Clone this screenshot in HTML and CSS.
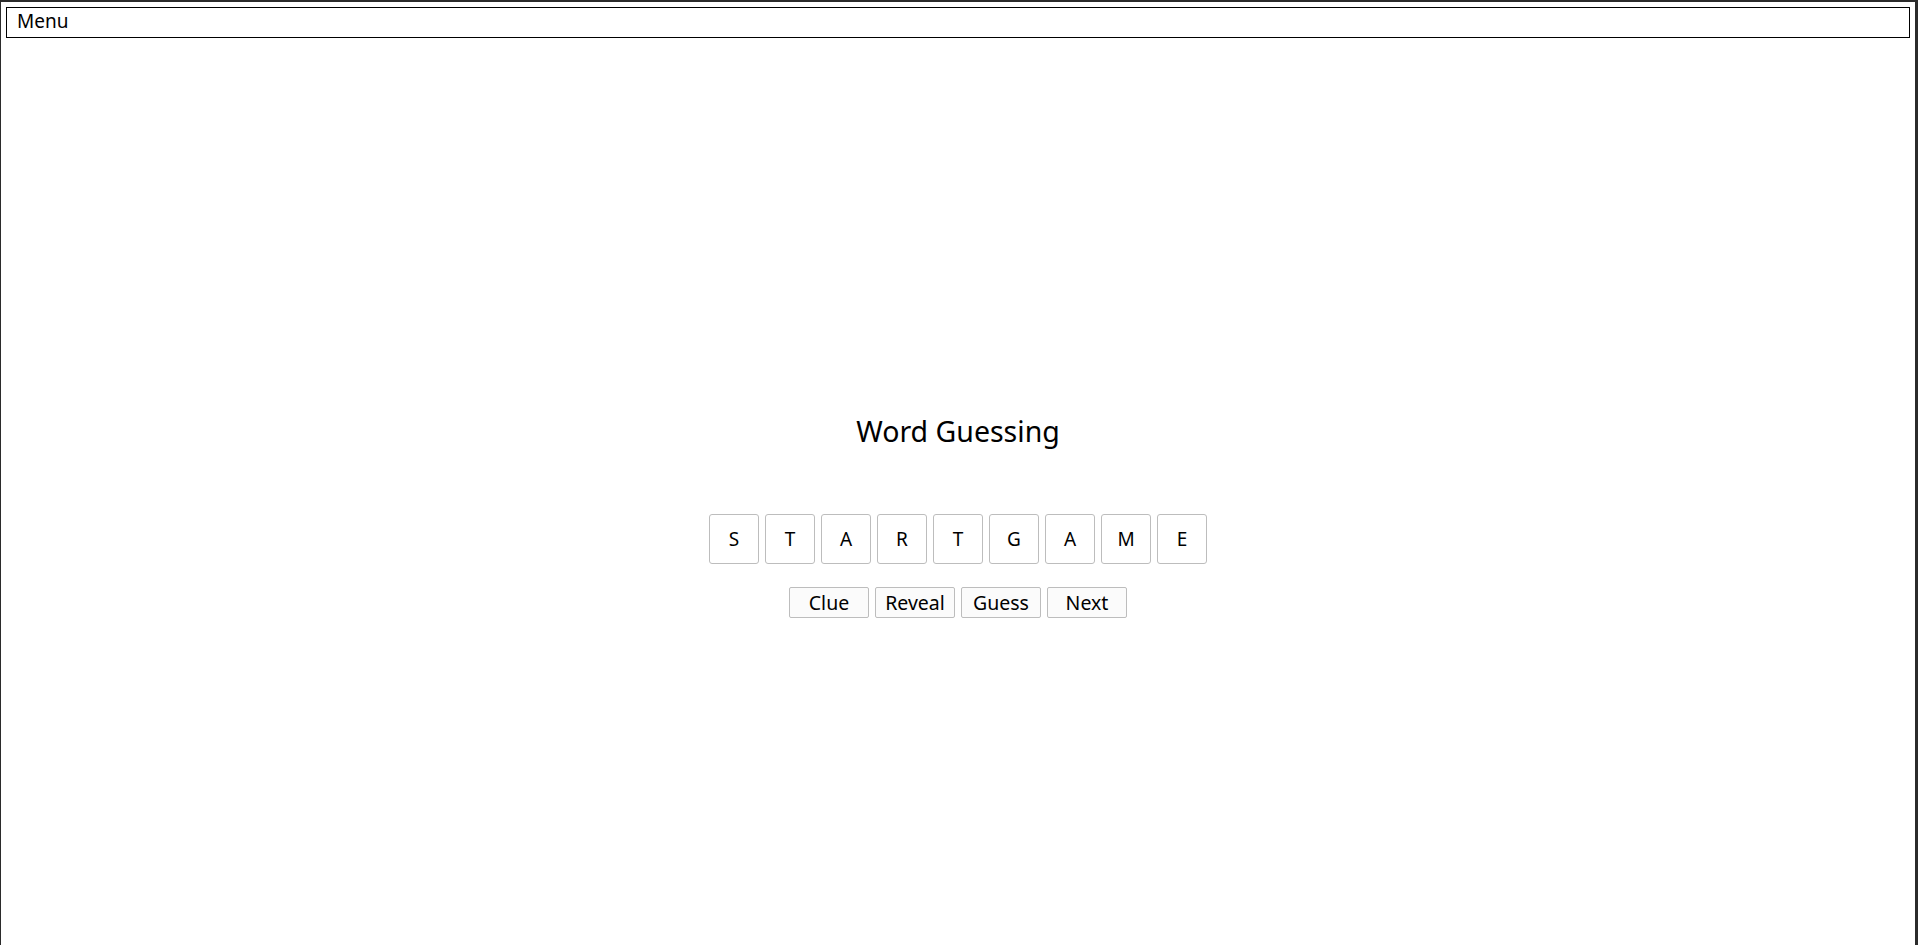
FILE: index.html
```html
<!DOCTYPE html>
<html lang="en">
<head>
<meta charset="utf-8">
<title>Word Guessing</title>
<link rel="stylesheet" href="styles.css">
</head>
<body>
<div class="frame">
  <nav class="menu">Menu</nav>
  <main class="stage">
    <h1 class="title">Word Guessing</h1>
    <div class="tiles">
      <div class="tile">S</div>
      <div class="tile">T</div>
      <div class="tile">A</div>
      <div class="tile">R</div>
      <div class="tile">T</div>
      <div class="tile">G</div>
      <div class="tile">A</div>
      <div class="tile">M</div>
      <div class="tile">E</div>
    </div>
    <div class="actions">
      <button class="btn">Clue</button>
      <button class="btn">Reveal</button>
      <button class="btn">Guess</button>
      <button class="btn">Next</button>
    </div>
  </main>
</div>
</body>
</html>
```
FILE: styles.css
```css
* { box-sizing: border-box; }
html, body { margin: 0; padding: 0; background: #ffffff; }
body {
  font-family: "Noto Sans", "DejaVu Sans", sans-serif;
  color: #000;
}
.frame {
  height: 945px;
  border-top: 2px solid #2b2b2b;
  border-left: 1px solid #2b2b2b;
  border-right: 3px solid #2b2b2b;
  padding: 5px 5px 0 5px;
  display: flex;
  flex-direction: column;
}
.menu {
  height: 31px;
  border: 1px solid #000;
  padding: 0 10px;
  font-size: 19px;
  line-height: 27px;
}
.stage {
  flex: 1;
  display: flex;
  flex-direction: column;
  align-items: center;
  padding-top: 373px;
}
.title {
  margin: 0;
  font-size: 28.5px;
  font-weight: 400;
  line-height: 40px;
}
.tiles {
  display: flex;
  gap: 6px;
  margin-top: 63px;
}
.tile {
  width: 50px;
  height: 50px;
  border: 1px solid #bdbdbd;
  border-radius: 3px;
  display: flex;
  align-items: center;
  justify-content: center;
  font-size: 19px;
}
.actions {
  display: flex;
  gap: 6px;
  margin-top: 23px;
}
.btn {
  width: 80px;
  height: 31px;
  padding: 0;
  border: 1px solid #bdbdbd;
  border-radius: 2px;
  background: #fbfbfb;
  font-family: inherit;
  font-size: 19.5px;
  line-height: 28px;
  color: #000;
}
```
